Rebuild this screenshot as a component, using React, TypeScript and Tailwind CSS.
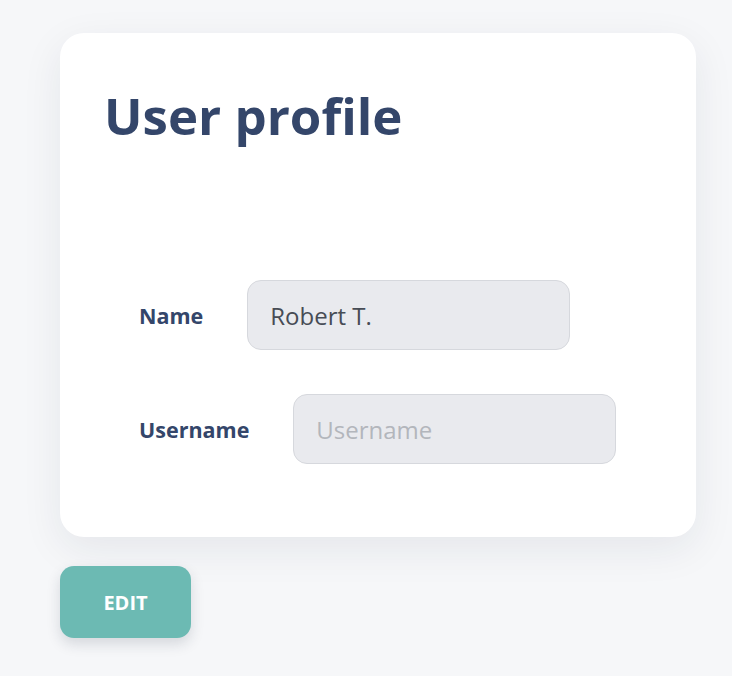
import React from "react";

export default function App() {
  return (
    <div
      className="min-h-screen w-full bg-[#f6f7f9] pt-[33px] pl-[60px] pr-[36px]"
      style={{ fontFamily: '"Open Sans", "Noto Sans", sans-serif' }}
    >
      <div className="w-[636px] rounded-[24px] bg-white pl-[44px] pt-[56px] pb-[73px] shadow-[0_12px_40px_rgba(30,40,60,0.08)]">
        <h1 className="text-[51px] leading-[52px] font-bold text-[#34466a]">User profile</h1>
        <div className="mt-[139px] pl-[35px] flex flex-col gap-[44px]">
          <div className="flex items-center gap-[44px]">
            <label className="text-[21.5px] font-bold text-[#34466a] pt-[2px]">Name</label>
            <input
              readOnly
              value="Robert T."
              className="h-[70px] w-[323px] rounded-[14px] border border-[#d6d8dd] bg-[#e9eaee] px-[22px] text-[24px] text-[#474c55] outline-none"
            />
          </div>
          <div className="flex items-center gap-[44px]">
            <label className="text-[21.5px] font-bold text-[#34466a] pt-[2px]">Username</label>
            <input
              readOnly
              placeholder="Username"
              className="h-[70px] w-[323px] rounded-[14px] border border-[#d6d8dd] bg-[#e9eaee] px-[22px] text-[24px] text-[#474c55] placeholder:text-[#b3b6bc] outline-none"
            />
          </div>
        </div>
      </div>
      <button className="mt-[29px] h-[72px] w-[131px] rounded-[14px] bg-[#6cbab3] text-[20px] font-bold text-white pt-[2px] shadow-[0_6px_14px_rgba(30,40,60,0.15)]">
        EDIT
      </button>
    </div>
  );
}
